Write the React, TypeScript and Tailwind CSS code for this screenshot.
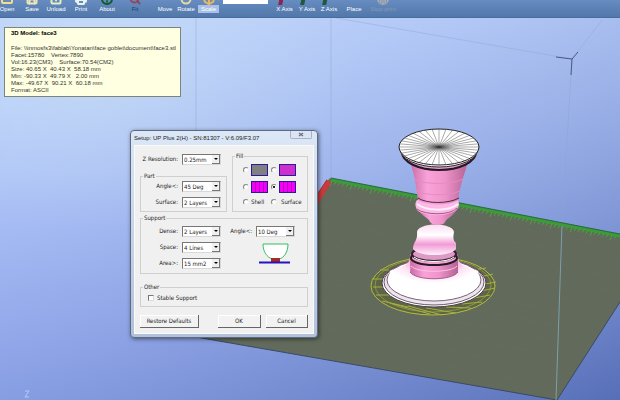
import React, { useState } from 'react';
import { Box, CircleHelp, Folder, Move, Pause, Printer, RotateCw, Save, Upload, Search } from 'lucide-react';

const tools = [
  { name: 'Open', icon: Folder, width: 'w-[14px]', color: 'text-[#f3dc8c]' },
  { name: 'Save', icon: Save, width: 'w-[36px]', color: 'text-[#f1e7b4]' },
  { name: 'Unload', icon: Upload, width: 'w-[12px]', color: 'text-[#e6efc0]' },
  { name: 'Print', icon: Printer, width: 'w-[38px]', color: 'text-[#e9f3ee]' },
  { name: 'About', icon: CircleHelp, width: 'w-[14px]', color: 'text-[#0e5c22]' },
  { name: 'Fit', icon: Search, width: 'w-[42px]', color: 'text-[#93465a]' },
  { name: 'Move', icon: Move, width: 'w-[18px]', color: 'text-transparent' },
  { name: 'Rotate', icon: RotateCw, width: 'w-[24px]', color: 'text-[#e8d9a0]' },
  { name: 'Scale', icon: Box, width: 'w-[21px]', color: 'text-[#e9b65c]' },
];

const axisTools = [
  { name: 'X Axis', width: 'w-[23px]', color: 'bg-[#8e2450]' },
  { name: 'Y Axis', width: 'w-[22px]', color: 'bg-[#1f5a3c]' },
  { name: 'Z Axis', width: 'w-[22px]', color: 'bg-[#1f5a3c]' },
  { name: 'Place', width: 'w-[28px]', color: 'bg-transparent' },
];

const modelInfo = [
  'File: \\\\inmosfs3\\fablab\\Yonatan\\face goblet\\document\\face3.stl',
  'Facet:15780    Vertex:7890',
  'Vol:16.23(CM3)    Surface:70.54(CM2)',
  'Size: 40.65 X  40.43 X  58.18 mm',
  'Min: -90.33 X  49.79 X   2.00 mm',
  'Max: -49.67 X  90.21 X  60.18 mm',
  'Format: ASCII',
];

const fills = [
  { id: 'solid', color: '#808080', lines: false },
  { id: 'dense', color: '#cc2fcc', lines: false },
  { id: 'loose', color: '#f400f4', lines: true },
  { id: 'hollow', color: '#f400f4', lines: true },
];

const Toolbar = () => (
  <header className="flex h-[18px] shrink-0 items-end overflow-hidden border-b border-[#496c9f] bg-linear-to-b from-[#668cc1] to-[#5277aa] font-['Liberation_Sans',sans-serif] text-[6px] leading-[8px] text-white">
    {tools.map(({ name, icon: Icon, width, color }) => (
      <button key={name} className={`flex shrink-0 flex-col items-center justify-end pb-[4px] ${width}`}>
        <Icon className={`h-3 w-3 shrink-0 ${color}`} strokeWidth={4} />
        <span
          className={
            name === 'Scale'
              ? 'w-full bg-[#a9c1e6] text-center'
              : name === 'Fit'
                ? 'text-[#17406f]'
                : ''
          }
        >
          {name}
        </span>
      </button>
    ))}
    <input
      aria-label="Scale factor"
      defaultValue="1"
      className="-mt-[8px] mr-[5px] ml-[4px] h-[12px] w-[45px] shrink-0 self-start bg-white px-1 text-[6px] text-black"
    />
    {axisTools.map(({ name, width, color }) => (
      <button key={name} className={`flex shrink-0 flex-col items-center justify-end pb-[4px] whitespace-nowrap ${width}`}>
        <span className={`mr-2 h-2 w-1 shrink-0 -skew-x-12 ${color}`} />
        <span>{name}</span>
      </button>
    ))}
    <button disabled className="flex w-[30px] shrink-0 flex-col items-center justify-end pb-[4px] whitespace-nowrap text-[#8799b3]">
      <Pause className="h-3 w-3 shrink-0 rounded-full bg-[#a5a9b5]" />
      <span>Stop print</span>
    </button>
  </header>
);

const Scene = () => {
  const spokes = Array.from({ length: 36 }, (_, i) => (i * Math.PI) / 18);
  const ticks = Array.from({ length: 72 }, (_, i) => i * 4);
  const grid = Array.from({ length: 12 }, (_, i) => i + 1);

  return (
    <svg
      viewBox="0 18 620 382"
      preserveAspectRatio="xMinYMin slice"
      className="absolute inset-0 h-full w-full"
      aria-hidden="true"
    >
      <defs>
        <linearGradient id="sky" x1="0" y1="0" x2="0" y2="1">
          <stop offset="0" stopColor="#bed4fb" />
          <stop offset="0.4" stopColor="#b4cafa" />
          <stop offset="1" stopColor="#90a6f1" />
        </linearGradient>
        <linearGradient id="shade" x1="0.2" y1="0" x2="1" y2="1">
          <stop offset="0" stopColor="#a8bcf4" stopOpacity="0" />
          <stop offset="0.5" stopColor="#8298d8" stopOpacity="0.55" />
          <stop offset="1" stopColor="#546cb4" stopOpacity="0.95" />
        </linearGradient>
        <radialGradient id="glow" cx="0.18" cy="0.15" r="0.4">
          <stop offset="0" stopColor="#c6dcf6" stopOpacity="0.9" />
          <stop offset="1" stopColor="#c6dcf6" stopOpacity="0" />
        </radialGradient>
        <linearGradient id="cup" x1="0" y1="0" x2="1" y2="0">
          <stop offset="0" stopColor="#c96aa6" />
          <stop offset="0.3" stopColor="#f9a2d9" />
          <stop offset="0.6" stopColor="#ee94ca" />
          <stop offset="1" stopColor="#b56294" />
        </linearGradient>
        <linearGradient id="knob" x1="0" y1="0" x2="0" y2="1">
          <stop offset="0" stopColor="#fbdcf2" />
          <stop offset="0.35" stopColor="#ffffff" />
          <stop offset="0.65" stopColor="#f29bd6" />
          <stop offset="1" stopColor="#fff0fb" />
        </linearGradient>
        <radialGradient id="foot" cx="0.5" cy="0.1" r="0.75">
          <stop offset="0.25" stopColor="#f39dd6" />
          <stop offset="0.5" stopColor="#ffe3f6" />
          <stop offset="0.7" stopColor="#ffffff" />
        </radialGradient>
        <radialGradient id="hub">
          <stop offset="0" stopColor="#222" />
          <stop offset="0.35" stopColor="#666" stopOpacity="0.7" />
          <stop offset="1" stopColor="#999" stopOpacity="0" />
        </radialGradient>
        <clipPath id="plate">
          <path d="M330 178L620 234V302L557 400L196 337Z" />
        </clipPath>
      </defs>

      <rect y="18" width="620" height="382" fill="url(#sky)" />
      <rect y="18" width="620" height="382" fill="url(#glow)" />
      <rect y="18" width="620" height="382" fill="url(#shade)" />

      {/* Build volume */}
      <g fill="none" stroke="#8ba2cf" strokeWidth="1" strokeOpacity="0.4">
        <path d="M196 18V336M331 18V178M336 18L572 59L602 20M572 59L562 224" />
      </g>
      <path d="M556 57L572 59L578 52M572 59L571 75" fill="none" stroke="#49597f" strokeWidth="1" />

      {/* Platform */}
      <path d="M330 178L620 234V302L557 400L196 337Z" fill="#616a5b" />
      <g clipPath="url(#plate)" stroke="#6b7466" strokeWidth="1" strokeOpacity="0.35">
        {grid.map((i) => (
          <path key={i} d={`M${330 - i * 11} ${178 + i * 13}l360 67M${330 + i * 26} ${178 + i * 5}l-130 170`} />
        ))}
      </g>
      <path d="M620 302L557 400L196 337" fill="none" stroke="#3b4a62" strokeWidth="1" />
      <path d="M562 225L556 400" stroke="#7d9fac" strokeWidth="1" />
      <path d="M331 180L620 236" stroke="#3a9c38" strokeWidth="3" />
      <path d="M331 178L620 234" stroke="#256d3d" strokeWidth="1" />
      <g stroke="#48a83c" strokeWidth="1">
        {ticks.map((x) => (
          <path key={x} d={`M${332 + x} ${181 + x * 0.193}l-2 ${x % 20 === 0 ? 5 : 3}`} />
        ))}
      </g>
      <path d="M329 181L314 205" stroke="#c93b3b" strokeWidth="6" />
      <path d="M327 180L314 199" stroke="#9f3b58" strokeWidth="1" />

      {/* Raft outline */}
      <ellipse cx="433" cy="286" rx="62" ry="29" fill="#5d6448" stroke="#b3bd3e" strokeWidth="1" />
      <ellipse cx="433" cy="285" rx="58" ry="27" fill="none" stroke="#8c963e" strokeWidth="1" />
      <g stroke="#a6b03c" strokeWidth="1">
        <path d="M372 279h12M373 287h11M376 295h14M382 301l26 6M390 303l40 11M408 306l34 9M426 308l30 5M446 307l25 1M462 304l20-2M474 298l16-3M481 291l14-3M485 284l11-2M484 276l9-2M478 269l8-1M380 270h9" />
      </g>

      {/* Foot */}
      <ellipse cx="434" cy="283" rx="52" ry="24" fill="#fff" stroke="#4d404c" strokeWidth="1" />
      <ellipse cx="434" cy="282" rx="50" ry="23" fill="#eee6ee" stroke="#6b5a68" strokeWidth="1" />
      <ellipse cx="434" cy="280" rx="47" ry="21" fill="#fff" stroke="#7c6378" strokeWidth="1" />
      <path d="M410 256C410 266 402 266 390 271C384 290 410 300 434 300C458 300 484 290 478 271C466 266 458 266 458 256Z" fill="url(#foot)" />
      <path d="M410 254C410 268 411 268 410 272C416 281 452 281 458 272V254Z" fill="url(#cup)" />
      <path d="M410 272C416 281 452 281 458 272" fill="none" stroke="#a25f8a" strokeWidth="1" />
      <path d="M411 266C417 273 451 273 457 266" fill="none" stroke="#fbc6e8" strokeWidth="1" />
      <ellipse cx="434" cy="258" rx="23" ry="7" fill="#e9a5d0" stroke="#271824" strokeWidth="2" />
      <ellipse cx="434" cy="254" rx="22" ry="7" fill="#dc9ac4" stroke="#33202e" strokeWidth="2" />
      <path d="M414 257C420 263 448 263 454 257" fill="none" stroke="#fff" strokeWidth="1" />

      {/* Stem */}
      <path d="M417 232C418 222 453 222 454 232C453 237 453 241 456 243V249C450 257 419 257 413 249C413 242 418 241 417 232Z" fill="url(#knob)" />
      <path d="M417 208C420 215 429 218 430 222C432 226 444 226 445 222C447 218 455 215 458 208Z" fill="url(#cup)" />
      <path d="M417 200C414 204 416 207 417 210C424 217 451 217 457 209C460 206 459 202 458 200Z" fill="#fcb9e5" />
      <path d="M417 204C426 211 448 212 458 204" fill="none" stroke="#fff0fb" strokeWidth="2" />
      <path d="M417 209C424 215 450 216 457 208" fill="none" stroke="#a5588a" strokeWidth="1" />

      {/* Bowl */}
      <path d="M410 162C415 176 416 186 418 200C427 206 448 206 458 200C460 186 464 175 468 162Z" fill="url(#cup)" />
      <path d="M414 179C425 185 452 185 463 179M416 191C426 196 450 196 460 191" fill="none" stroke="#e68cc3" strokeWidth="1" />
      <path d="M418 198C427 204 448 204 459 198" fill="none" stroke="#552b48" strokeWidth="1" />
      <ellipse cx="439" cy="152" rx="37" ry="18" fill="#e1a0cb" stroke="#241923" strokeWidth="2" />
      <ellipse cx="439" cy="149" rx="39" ry="18" fill="#fff" stroke="#33202e" strokeWidth="1" />
      <ellipse cx="439" cy="147" rx="40" ry="18" fill="#fff" stroke="#222" strokeWidth="1" />
      <g stroke="#555" strokeWidth="0.5">
        {spokes.map((a) => (
          <path key={a} d={`M439 147L${439 + 40 * Math.cos(a)} ${147 + 18 * Math.sin(a)}`} />
        ))}
      </g>
      <ellipse cx="439" cy="147" rx="14" ry="5" fill="url(#hub)" />

      {/* Z axis marker */}
      <path d="M25 391h4l-4 6h4" fill="none" stroke="#b9c8f4" strokeWidth="1" />
    </svg>
  );
};

const Field = ({ id, label, value, options }: { id: string; label: string; value: string; options: string[] }) => (
  <div className="flex items-center justify-end gap-[4px]">
    <label htmlFor={id} className="pb-[2px] whitespace-nowrap">
      {label}
    </label>
    <div className="relative h-[11px] w-[39px] shrink-0">
      <select
        id={id}
        defaultValue={value}
        className="block h-full w-full appearance-none border border-[#d8d8d8] border-t-[#777] border-l-[#777] bg-white pl-[1px] leading-[8px]"
      >
        {[value, ...options].map((o) => (
          <option key={o}>{o}</option>
        ))}
      </select>
      <span className="pointer-events-none absolute top-px right-px flex h-[9px] w-[8px] items-center justify-center border-r border-b border-[#777] bg-[#f0f0f0]">
        <svg viewBox="0 0 4 2" className="h-[2px] w-[4px]">
          <path d="M0 0h4L2 2z" fill="#000" />
        </svg>
      </span>
    </div>
  </div>
);

const Group = ({ title, className, children }: { title: string; className: string; children: React.ReactNode }) => (
  <fieldset className="min-w-0 flex-1 border border-[#cfcfcf]">
    <legend className="ml-[2px] px-[1px] leading-[8px]">{title}</legend>
    <div className={className}>{children}</div>
  </fieldset>
);

const radioClass =
  'h-[6px] w-[6px] shrink-0 appearance-none rounded-full border border-[#f0f0f0] border-t-[#888] border-l-[#888] bg-white checked:bg-[radial-gradient(circle,#222_1px,#fff_1px)]';

const buttonClass = 'h-[13px] border-r border-b border-[#666] bg-[#f2f2f2] shadow-[inset_1px_1px_0_#fff] leading-[8px]';

const SetupDialog = () => {
  const [fill, setFill] = useState('hollow');
  const [stable, setStable] = useState(false);

  return (
    <section
      role="dialog"
      aria-label="Setup"
      className="absolute top-[112px] left-[130px] w-[188px] rounded-[4px] border border-[#5c6b80] bg-linear-to-b from-[#dce8f7] to-[#b3c0da] px-[3px] pb-[3px] font-['DejaVu_Sans_Condensed','DejaVu_Sans',sans-serif] text-[6px] leading-[8px] text-[#222] shadow-[1px_1px_4px_rgba(0,0,0,0.5)]"
    >
      <div className="flex h-[14px] items-center justify-between font-['Liberation_Sans',sans-serif]">
        <h2 className="whitespace-nowrap">Setup: UP Plus 2(H) - SN:81307 - V:6.09/F3.07</h2>
        <button
          aria-label="Close"
          className="mr-[2px] flex h-[8px] w-[22px] items-center justify-center self-start rounded-b-[2px] border border-t-0 border-[#a7b4c8] bg-[#dbe5f2]"
        >
          <svg viewBox="0 0 6 5" className="h-[5px] w-[6px]">
            <path d="M1 1L5 4M5 1L1 4" stroke="#6b7688" strokeWidth="1.5" />
          </svg>
        </button>
      </div>

      <div className="border border-[#fafafa] bg-[#f0f0f0] px-[5px] pt-[6px] pb-[5px]">
        <div className="flex gap-[5px]">
          <div className="flex w-[87px] shrink-0 flex-col gap-[7px] pt-[2px]">
            <div className="pr-[6px]">
              <Field id="z-resolution" label="Z Resolution:" value="0.25mm" options={['0.15mm', '0.20mm', '0.30mm']} />
            </div>
            <Group title="Part" className="flex flex-col gap-[5px] pt-px pr-[5px] pb-[3px]">
              <Field id="part-angle" label="Angle<:" value="45 Deg" options={['30 Deg', '60 Deg']} />
              <Field id="part-surface" label="Surface:" value="2 Layers" options={['3 Layers', '4 Layers']} />
            </Group>
          </div>
          <Group title="Fill" className="pt-[4px] pb-[5px] pl-[10px]">
            <div className="grid grid-cols-[28px_28px] gap-y-[5px]">
              {fills.map((f) => (
                <label key={f.id} className="flex h-[12px] items-center gap-[2px]">
                  <input
                    type="radio"
                    name="fill"
                    aria-label={`Fill ${f.id}`}
                    checked={fill === f.id}
                    onChange={() => setFill(f.id)}
                    className={radioClass}
                  />
                  <svg viewBox="0 0 17 12" className="h-[12px] w-[17px]">
                    <rect x="0.5" y="0.5" width="16" height="11" fill={f.color} stroke="#2b1a9c" />
                    {f.lines && <path d="M4.5 1v10M8.5 1v10M12.5 1v10" stroke="#b800c8" />}
                  </svg>
                </label>
              ))}
              <label className="flex h-[8px] items-center gap-[2px]">
                <input type="radio" name="fill" checked={fill === 'shell'} onChange={() => setFill('shell')} className={radioClass} />
                Shell
              </label>
              <label className="flex h-[8px] items-center gap-[4px]">
                <input type="radio" name="fill" checked={fill === 'surface'} onChange={() => setFill('surface')} className={radioClass} />
                Surface
              </label>
            </div>
          </Group>
        </div>

        <div className="mt-[2px] flex">
          <Group title="Support" className="flex pt-[4px] pb-[4px]">
            <div className="flex w-[80px] flex-col gap-[5px]">
              <Field id="dense" label="Dense:" value="2 Layers" options={['3 Layers', '4 Layers']} />
              <Field id="space" label="Space:" value="4 Lines" options={['6 Lines', '8 Lines']} />
              <Field id="area" label="Area>:" value="15 mm2" options={['5 mm2', '10 mm2']} />
            </div>
            <div className="flex w-[74px] flex-col items-end gap-[5px]">
              <Field id="support-angle" label="Angle<:" value="10 Deg" options={['20 Deg', '30 Deg']} />
              <svg viewBox="0 0 32 22" className="mr-[4px] h-[22px] w-[32px]">
                <path d="M4 2H29C29 10 25 16 20 17H13C8 15 4 10 4 2Z" fill="#fff" stroke="#35c15c" strokeWidth="1" />
                <rect x="12" y="16" width="9" height="4" fill="#a82a20" />
                <path d="M0 20.5H31" stroke="#2512c4" strokeWidth="2" />
              </svg>
            </div>
          </Group>
        </div>

        <div className="mt-[9px] flex">
          <Group title="Other" className="pt-[3px] pb-[4px] pl-[7px]">
            <label className="flex h-[8px] items-center gap-[3px]">
              <input
                type="checkbox"
                checked={stable}
                onChange={(e) => setStable(e.target.checked)}
                className="h-[6px] w-[6px] shrink-0 appearance-none border border-[#ddd] border-t-[#777] border-l-[#777] bg-white checked:bg-black"
              />
              Stable Support
            </label>
          </Group>
        </div>

        <div className="mt-[8px] flex">
          <button className={`w-[59px] ${buttonClass}`}>Restore Defaults</button>
          <button className={`ml-auto w-[43px] ${buttonClass}`}>OK</button>
          <button className={`ml-[5px] w-[42px] ${buttonClass}`}>Cancel</button>
        </div>
      </div>
    </section>
  );
};

const App = () => {
  return (
    <div className="flex min-h-screen flex-col overflow-hidden bg-[#9fb5ee]">
      <Toolbar />
      <main className="relative flex-1 overflow-hidden">
        <Scene />
        {/* Model info tooltip */}
        <aside className="absolute top-[9px] left-[4px] w-[177px] border border-[#7d8478] bg-[#ffffe1] px-[6px] pt-[2px] pb-[2px] font-['Liberation_Sans',sans-serif] text-[6px] leading-[7px] text-[#333]">
          <h1 className="mb-[8px] font-bold text-black">3D Model: face3</h1>
          {modelInfo.map((line) => (
            <p key={line} className="whitespace-pre">
              {line}
            </p>
          ))}
        </aside>
        <SetupDialog />
      </main>
    </div>
  );
};

export default App;
